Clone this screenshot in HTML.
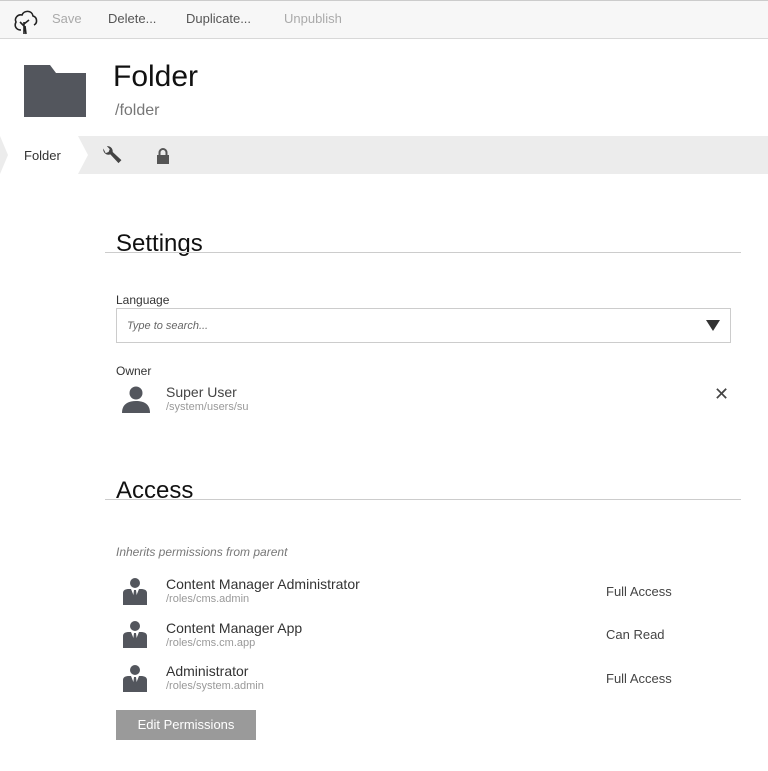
<!DOCTYPE html>
<html><head><style>
*{margin:0;padding:0;box-sizing:border-box}
body{width:768px;height:771px;background:#fff;font-family:"Liberation Sans",sans-serif;position:relative;overflow:hidden;color:#222}
.a{position:absolute;white-space:nowrap}
</style></head><body>
<div class="a" style="left:0;top:0;width:768px;height:39px;background:#f7f7f7;border-top:1px solid #ccc;border-bottom:1px solid #d8d8d8"></div>
<svg class="a" style="left:13px;top:8px" width="26" height="28" viewBox="0 0 26 28"><path d="M11 26V14M11 18l-4-4M11 16l5-4M13 26l-1-8M8 22c-5 0-7-4-5-8-2-4 2-8 6-7 2-5 10-5 11 1 4 1 5 7 1 9" fill="none" stroke="#222" stroke-width="1.6"/></svg>
<div class="a" style="left:52px;top:11px;font-size:13px;color:#aaa">Save</div>
<div class="a" style="left:108px;top:11px;font-size:13px;color:#555">Delete...</div>
<div class="a" style="left:186px;top:11px;font-size:13px;color:#555">Duplicate...</div>
<div class="a" style="left:284px;top:11px;font-size:13px;color:#aaa">Unpublish</div>
<svg class="a" style="left:24px;top:65px" width="62" height="52"><path d="M0 0H26L32 8H62V52H0Z" fill="#53565d"/></svg>
<div class="a" style="left:113px;top:60px;font-size:30px;color:#111">Folder</div>
<div class="a" style="left:115px;top:102px;font-size:16px;color:#777">/folder</div>
<div class="a" style="left:0;top:136px;width:768px;height:38px;background:#ececec"></div>
<svg class="a" style="left:0;top:136px" width="90" height="38"><path d="M0 0H78L88 19L78 38H0L8 19Z" fill="#fff"/></svg>
<div class="a" style="left:24px;top:148px;font-size:13px;color:#333">Folder</div>
<svg class="a" style="left:101px;top:145px" width="21" height="21" viewBox="0 0 18 18"><path d="M2 3a4.5 4.5 0 0 0 6 5l7 7.5 2.5-2.5-7.5-7A4.5 4.5 0 0 0 5 1l2.5 2.5-1 2.5-2.5 1z" fill="#444"/></svg>
<svg class="a" style="left:157px;top:148px" width="12" height="16"><path d="M2.5 7V4.5a3.5 3.5 0 0 1 7 0V7" fill="none" stroke="#555" stroke-width="2"/><rect x="0" y="7" width="12" height="9" fill="#555"/></svg>
<div class="a" style="left:116px;top:230px;font-size:24px;color:#111">Settings</div>
<div class="a" style="left:105px;top:252px;width:636px;height:1px;background:#ccc"></div>
<div class="a" style="left:116px;top:293px;font-size:12px;color:#333">Language</div>
<div class="a" style="left:116px;top:308px;width:615px;height:35px;border:1px solid #ccc"></div>
<div class="a" style="left:127px;top:320px;font-size:11px;font-style:italic;color:#666">Type to search...</div>
<svg class="a" style="left:706px;top:320px" width="14" height="11"><path d="M0 0H14L7 11Z" fill="#333"/></svg>
<div class="a" style="left:116px;top:364px;font-size:12px;color:#333">Owner</div>
<svg class="a" style="left:122px;top:385px" width="28" height="28"><circle cx="14" cy="8" r="6.5" fill="#53565d"/><path d="M0 28C0 19 6 16 14 16S28 19 28 28Z" fill="#53565d"/></svg>
<div class="a" style="left:166px;top:384px;font-size:14px;color:#444">Super User</div>
<div class="a" style="left:166px;top:401px;font-size:11px;color:#999">/system/users/su</div>
<div class="a" style="left:714px;top:384px;font-size:18px;color:#444">✕</div>
<div class="a" style="left:116px;top:477px;font-size:24px;color:#111">Access</div>
<div class="a" style="left:105px;top:499px;width:636px;height:1px;background:#ccc"></div>
<div class="a" style="left:116px;top:545px;font-size:12px;font-style:italic;color:#777">Inherits permissions from parent</div>
<svg width="0" height="0" style="position:absolute"><defs><g id="r"><circle cx="12" cy="6" r="5" fill="#53565d"/><path d="M0 28V16c0-3 3-4 6-4h12c3 0 6 1 6 4v12Z" fill="#53565d"/><path d="M8 12l4 10 4-10Z" fill="#fff"/><path d="M11 13h2l1 8-2 2-2-2z" fill="#53565d"/></g></defs></svg>
<svg class="a" style="left:123px;top:577px" width="24" height="28"><use href="#r"/></svg>
<svg class="a" style="left:123px;top:620px" width="24" height="28"><use href="#r"/></svg>
<svg class="a" style="left:123px;top:664px" width="24" height="28"><use href="#r"/></svg>
<div class="a" style="left:166px;top:576px;font-size:14px;color:#333">Content Manager Administrator</div>
<div class="a" style="left:166px;top:593px;font-size:11px;color:#999">/roles/cms.admin</div>
<div class="a" style="left:606px;top:584px;font-size:13px;color:#444">Full Access</div>
<div class="a" style="left:166px;top:620px;font-size:14px;color:#333">Content Manager App</div>
<div class="a" style="left:166px;top:637px;font-size:11px;color:#999">/roles/cms.cm.app</div>
<div class="a" style="left:606px;top:627px;font-size:13px;color:#444">Can Read</div>
<div class="a" style="left:166px;top:663px;font-size:14px;color:#333">Administrator</div>
<div class="a" style="left:166px;top:680px;font-size:11px;color:#999">/roles/system.admin</div>
<div class="a" style="left:606px;top:671px;font-size:13px;color:#444">Full Access</div>
<div class="a" style="left:116px;top:710px;width:140px;height:30px;background:#9a9a9a;color:#fff;font-size:13px;text-align:center;line-height:30px">Edit Permissions</div>
</body></html>
